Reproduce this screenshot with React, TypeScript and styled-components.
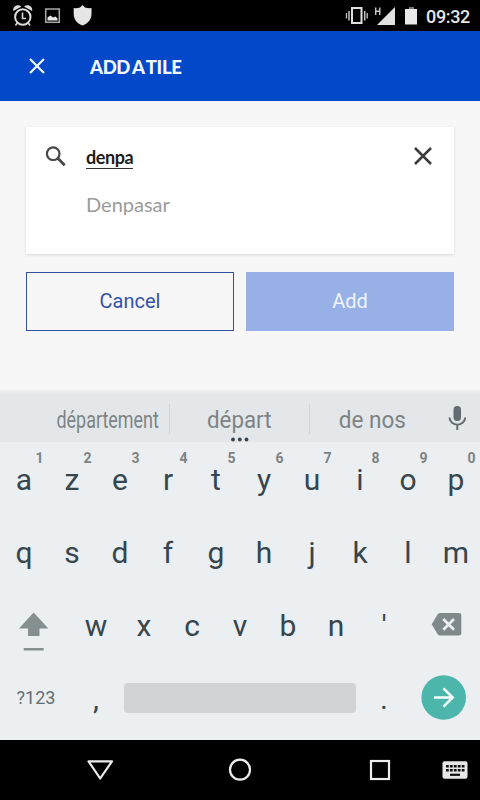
import React from "react";
import styled, { createGlobalStyle } from "styled-components";

const GlobalStyle = createGlobalStyle`
  * { box-sizing: border-box; }
  body { margin: 0; background: #f7f7f7; }
  button { appearance: none; border: 0; padding: 0; background: none; font: inherit; color: inherit; }
  svg { display: block; flex: none; }
`;

const Screen = styled.div`
  width: 480px;
  height: 800px;
  display: flex;
  flex-direction: column;
  overflow: hidden;
  background: #f7f7f7;
  font-family: Roboto, sans-serif;
`;

const StatusBar = styled.header`
  height: 31px;
  flex: none;
  display: flex;
  justify-content: space-between;
  background: #000;
  color: #e6e6e6;
`;

const Clock = styled.span`
  width: 54px;
  font-size: 18px;
  font-weight: 500;
  line-height: 33px;
  letter-spacing: -0.35px;
`;

const StatusRight = styled.div`
  display: flex;
`;

const AppBar = styled.div`
  height: 70px;
  flex: none;
  display: flex;
  align-items: center;
  background: #0348c9;
  color: #f2f7ff;
`;

const CloseButton = styled.button`
  width: 90px;
  padding-left: 29px;
`;

const Title = styled.h1`
  margin: 2px 0 0;
  font-family: Lato, sans-serif;
  font-size: 18.5px;
  font-weight: 900;
  line-height: 24px;
  letter-spacing: -0.35px;
  word-spacing: -1.6px;
`;

const Content = styled.main`
  height: 289px;
  flex: none;
  padding: 26px 26px 0;
`;

const SearchCard = styled.section`
  height: 127px;
  display: grid;
  grid-template-columns: 60px 1fr 62px;
  grid-template-rows: 60px 34px;
  background: #fff;
  box-shadow: 0 1px 3px rgba(0, 0, 0, 0.13);
  font-family: Lato, sans-serif;
`;

const Query = styled.div`
  padding-top: 19px;
  font-size: 18px;
  font-weight: 700;
  line-height: 22px;
  color: #1c1c1c;

  span {
    display: inline-block;
    height: 23px;
    border-bottom: 1px solid #333;
    letter-spacing: -0.45px;
  }
`;

const Suggestion = styled.div`
  grid-column: 2;
  font-size: 20px;
  line-height: 34px;
  color: #9b9b9b;
`;

const Actions = styled.div`
  display: grid;
  grid-template-columns: 208px 208px;
  gap: 12px;
  margin-top: 18px;
`;

const ActionButton = styled.button<{ $filled?: boolean }>`
  height: 59px;
  border: ${(p) => (p.$filled ? "0" : "1px solid #3351a5")};
  background: ${(p) => (p.$filled ? "#97b1e6" : "transparent")};
  color: ${(p) => (p.$filled ? "#edf4ff" : "#3453a6")};
  font-size: 20px;
  line-height: 24px;
  padding-bottom: 1px;
`;

const SuggestionStrip = styled.div`
  height: 52px;
  flex: none;
  display: grid;
  grid-template-columns: 45px 125px 140px 125px 45px;
  padding-top: 3px;
  background: linear-gradient(#eff1f2, #e3e7ea 4px);
  color: #7c8487;
`;

const Word = styled.div<{ $divided?: boolean; $active?: boolean }>`
  position: relative;
  display: flex;
  justify-content: center;
  margin: 11px 0 5px;
  height: 30px;
  border-right: ${(p) => (p.$divided ? "1px solid #d2d6d8" : "0")};
  font-size: 23px;
  line-height: 33px;
  white-space: nowrap;

  span {
    transform: scaleX(${(p) => (p.$active ? 0.97 : 0.98)});
  }
`;

const LongWord = styled(Word)`
  padding-left: 2px;

  span {
    transform: scaleX(0.78);
  }
`;

const MoreDots = styled.svg`
  position: absolute;
  left: 59px;
  top: 33px;
`;

const Keyboard = styled.div`
  height: 298px;
  flex: none;
  padding-bottom: 6px;
  background: #ebeff2;
  color: #37464d;
`;

const KeyRow = styled.div`
  height: 73px;
  display: flex;
`;

const Key = styled.button<{ $width?: number }>`
  position: relative;
  width: ${(p) => p.$width ?? 48}px;
  height: 73px;
  display: flex;
  justify-content: center;
  font-size: 30px;
  line-height: 75px;
`;

const IconKey = styled(Key)`
  align-items: center;
`;

const SymbolsKey = styled(Key)`
  font-size: 18px;
  line-height: 74px;
  color: #656e72;
`;

const Hint = styled.span`
  position: absolute;
  top: 8px;
  right: 0.5px;
  width: 16px;
  text-align: center;
  font-size: 14px;
  font-weight: 700;
  line-height: 16px;
  color: #7b8386;
`;

const SpaceBar = styled.button`
  width: 232px;
  height: 30px;
  margin: 22px 4px 0;
  border-radius: 4px;
  background: #d0d4d7;
`;

const NavBar = styled.nav`
  height: 60px;
  flex: none;
  display: flex;
  background: #000;
`;

const LETTERS_TOP = ["a", "z", "e", "r", "t", "y", "u", "i", "o", "p"];
const LETTERS_HOME = ["q", "s", "d", "f", "g", "h", "j", "k", "l", "m"];
const LETTERS_BOTTOM = ["w", "x", "c", "v", "b", "n", "'"];

const StatusLeftIcons = () => (
  <svg width="110" height="31" viewBox="0 0 110 31" fill="none">
    <circle cx="22.8" cy="17" r="7.7" stroke="#dcdcdc" strokeWidth="2" />
    <path d="M22.5 12.5V18.5H26M17.5 22.5L15.5 25.500M28 22.5L30 25.500" stroke="#d5d5d5" strokeWidth="1.6" />
    <path d="M13.300 11C12.500 6 18 3.500 21.300 6.700ZM32.200 11C33 6 27.500 3.500 24.200 6.700Z" fill="#dcdcdc" />
    <rect x="45.700" y="9" width="13.600" height="13.300" stroke="#a9a9a9" strokeWidth="1.500" />
    <path d="M47.500 20.500V17.500L50.500 15.500L53 17.500L55.500 16.500L57.500 18.500V20.500Z" fill="#e8e8e8" />
    <path d="M82.500 5L85 7.500Q88 8.500 91.500 8V14C91.500 20 87 24 82.500 25.500C78 24 73.700 20 73.700 14V8Q77 8.500 80 7.500Z" fill="#e5e5e5" />
  </svg>
);

const StatusRightIcons = () => (
  <svg width="86" height="31" viewBox="340 0 86 31" fill="none">
    <rect x="352" y="8" width="9.500" height="15" stroke="#dedede" strokeWidth="2" />
    <path d="M349 11V20.500M364.700 11V20.500" stroke="#c4c4c4" strokeWidth="1.500" />
    <path d="M346.500 13V18.500M367.200 13V18.500" stroke="#c4c4c4" strokeWidth="1.300" />
    <path d="M375.700 7.500V15M379.800 7.500V15M375.700 11.200H379.800" stroke="#c8c8c8" strokeWidth="1.400" />
    <path d="M395 7V25H377Z" fill="#e2e2e2" />
    <path d="M405 9H409V7H413.500V9H417V24.500H405Z" fill="#e9e9e9" />
    <path d="M409 7H413.500V9H409Z" fill="#777" />
  </svg>
);

const Cross = ({ size, weight, color }: { size: number; weight: number; color: string }) => (
  <svg width={size} height={size} viewBox={`0 0 ${size} ${size}`} fill="none">
    <path
      d={`M1 1L${size - 1} ${size - 1}M${size - 1} 1L1 ${size - 1}`}
      stroke={color}
      strokeWidth={weight}
    />
  </svg>
);

const CardIcon = styled.div<{ $x: number; $y: number }>`
  padding: ${(p) => `${p.$y}px 0 0 ${p.$x}px`};
`;

const App = () => (
  <>
    <GlobalStyle />
    <Screen>
      <StatusBar>
        <StatusLeftIcons />
        <StatusRight>
          <StatusRightIcons />
          <Clock>09:32</Clock>
        </StatusRight>
      </StatusBar>

      <AppBar>
        <CloseButton aria-label="Close">
          <Cross size={16} weight={2.2} color="#edf5ff" />
        </CloseButton>
        <Title>ADD A TILE</Title>
      </AppBar>

      <Content>
        <SearchCard>
          <CardIcon $x={19} $y={19}>
            <svg width="22" height="22" viewBox="0 0 22 22" fill="none" stroke="#484848">
              <circle cx="8.200" cy="7.700" r="6.300" strokeWidth="2.200" />
              <path d="M12.500 12L19.700 19.200" strokeWidth="2.800" />
            </svg>
          </CardIcon>
          <Query>
            <span>denpa</span>
          </Query>
          <CardIcon $x={22} $y={20}>
            <Cross size={18} weight={2.5} color="#3c3c3e" />
          </CardIcon>
          <Suggestion>Denpasar</Suggestion>
        </SearchCard>
        <Actions>
          <ActionButton>Cancel</ActionButton>
          <ActionButton $filled>Add</ActionButton>
        </Actions>
      </Content>

      <SuggestionStrip>
        <div />
        <LongWord $divided>
          <span>département</span>
        </LongWord>
        <Word $divided $active>
          <span>départ</span>
          <MoreDots width="22" height="6" viewBox="0 0 22 6" fill="#37464d">
            <circle cx="4" cy="2.500" r="1.900" />
            <circle cx="10.800" cy="2.500" r="1.900" />
            <circle cx="17.500" cy="2.500" r="1.900" />
          </MoreDots>
        </Word>
        <Word>
          <span>de nos</span>
        </Word>
        <svg width="45" height="49" viewBox="435 393 45 49" fill="none">
          <rect x="453.500" y="406" width="7.500" height="15" rx="3.500" fill="#626d72" />
          <path d="M449.500 417.500C450 427 464.700 427 465.200 417.500M457.300 425V430" stroke="#626d72" strokeWidth="2" />
        </svg>
      </SuggestionStrip>

      <Keyboard>
        <KeyRow>
          {LETTERS_TOP.map((letter, i) => (
            <Key key={letter}>
              {letter}
              <Hint>{(i + 1) % 10}</Hint>
            </Key>
          ))}
        </KeyRow>
        <KeyRow>
          {LETTERS_HOME.map((letter) => (
            <Key key={letter}>{letter}</Key>
          ))}
        </KeyRow>
        <KeyRow>
          <IconKey $width={72} aria-label="Shift">
            <svg width="72" height="73" viewBox="0 588 72 73" fill="#858e91">
              <path d="M33.700 612.500L48.300 628.500H39.500V636H28V628.500H19Z" />
              <path d="M23.700 648H43.700V650.500H23.700Z" />
            </svg>
          </IconKey>
          {LETTERS_BOTTOM.map((letter) => (
            <Key key={letter}>{letter}</Key>
          ))}
          <IconKey $width={72} aria-label="Delete">
            <svg width="72" height="73" viewBox="408 588 72 73">
              <path d="M440 613H459Q461.300 613 461.300 615V633.500Q461.300 635.500 459 635.500H440Q438.500 635.500 437.500 634L431.700 624.300L437.500 614.500Q438.500 613 440 613Z" fill="#7f898c" />
              <path d="M443.300 619L454 629.800M454 619L443.300 629.800" stroke="#ebeff2" strokeWidth="2.700" fill="none" />
            </svg>
          </IconKey>
        </KeyRow>
        <KeyRow>
          <SymbolsKey $width={72}>?123</SymbolsKey>
          <Key>,</Key>
          <SpaceBar aria-label="Space" />
          <Key>.</Key>
          <IconKey $width={72} aria-label="Next">
            <svg width="72" height="73" viewBox="408 661 72 73" fill="none">
              <circle cx="443.700" cy="697.500" r="22.300" fill="#4db6ac" />
              <path d="M434 697.500H452.500M443.500 688.300L452.700 697.500L443.500 706.700" stroke="#f3fffd" strokeWidth="2.600" />
            </svg>
          </IconKey>
        </KeyRow>
      </Keyboard>

      <NavBar>
        <svg width="480" height="60" viewBox="0 740 480 60" fill="none" stroke="#ececec" strokeWidth="2.200">
          <path d="M88.500 761.300H112L100.200 778.500Z" strokeLinejoin="round" />
          <circle cx="240" cy="769.700" r="10" />
          <rect x="371" y="761" width="18" height="18" />
          <rect x="442.500" y="761.300" width="25" height="17.500" rx="2" fill="#e8e8e8" stroke="none" />
          <path d="M446 766.300H464.500M446 770.300H464.500" stroke="#111" strokeWidth="2.500" strokeDasharray="2.800 1.130" />
          <path d="M450 774.800H460" stroke="#111" />
        </svg>
      </NavBar>
    </Screen>
  </>
);

export default App;
